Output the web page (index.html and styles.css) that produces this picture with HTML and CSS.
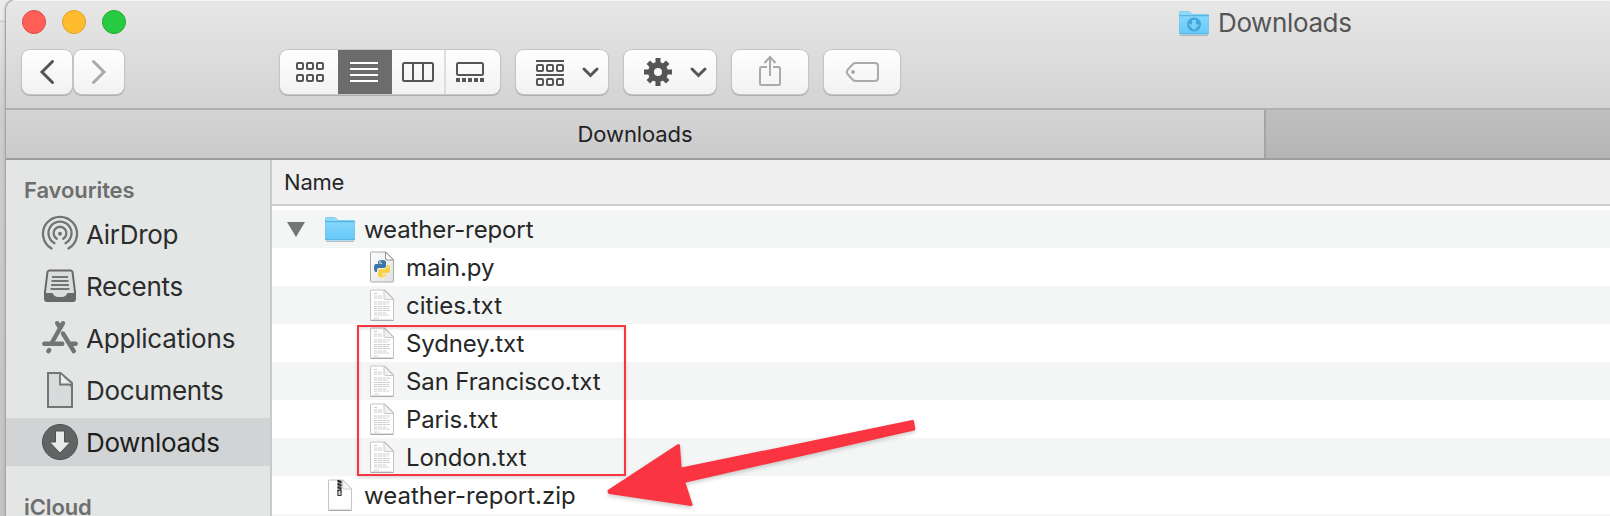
FILE: index.html
```
<!DOCTYPE html>
<html lang="en">
<head>
<meta charset="utf-8">
<title>Downloads</title>
<link rel="stylesheet" href="styles.css">
</head>
<body>
<svg class="defs" width="0" height="0" aria-hidden="true">
  <defs>
    <linearGradient id="folder-fill" x1="0" y1="0" x2="0" y2="1"><stop offset="0" stop-color="#84d6fb"/><stop offset="1" stop-color="#66c8f7"/></linearGradient>
    <linearGradient id="paper-fill" x1="0" y1="0" x2="1" y2="1"><stop offset="0" stop-color="#fdfdfd"/><stop offset="1" stop-color="#e2e2e2"/></linearGradient>
    <symbol id="folder" viewBox="0 0 32 28">
      <path d="M1 25V4q0-2 2-2h7q1 0 2 1l2 2h15q2 0 2 2v18z" fill="#74c3e8"/>
      <path d="M1.500 7V4q0-1.500 1.500-1.500h7q1 0 2 1L14 5.500h15q1.500 0 1.500 1.500z" fill="#8fd9fa"/>
      <path d="M1.500 7.500h29V24q0 1.500-1.500 1.500H3q-1.500 0-1.500-1.500z" fill="url(#folder-fill)"/>
      <path d="M1 6.500h30M1.500 24.500h29" stroke="#58b4e0" fill="none"/>
      <path d="M2 26.500h28" stroke="#999" opacity=".6"/>
    </symbol>
    <symbol id="text-file" viewBox="0 0 26 32">
      <path d="M1.500 2q0-1 1-1H16l8.500 8.500V30q0 1-1 1h-21q-1 0-1-1z" fill="#fff" stroke="#c4c4c4"/>
      <path d="M1.500 31.500h23" stroke="#a9a9a9"/>
      <path d="M15 1l9.500 9.500h-8q-1.500 0-1.500-1.500z" fill="#f2f2f2" stroke="#c8c8c8"/>
      <path d="M5 4.500h4M5 7h8M5 9h8M5 13h16M5 15h14M5 17.500h16M5 19.500h15M5 21.500h16M5 24h13M5 26h15M5 29h5" stroke="#c8c8c8" stroke-width=".9" stroke-dasharray="3 .6 5 .5"/>
    </symbol>
  </defs>
</svg>
<div class="window">
  <header class="toolbar">
    <div class="titlebar">
      <div class="lights"><i class="light red"></i><i class="light yellow"></i><i class="light green"></i></div>
      <div class="title">
        <svg width="32" height="28" viewBox="0 0 32 28"><use href="#folder"/><circle cx="16" cy="15.500" r="7" fill="#41a7dc"/><path d="M14 11h4v4.500h3.500L16 21l-5.500-5.500H14z" fill="#7dd0f8"/></svg>
        <span class="title-text">Downloads</span>
      </div>
    </div>
    <div class="buttons">
      <div class="button nav"><svg width="50" height="45"><path d="M30.500 11.500L20 22 30.500 32.500" fill="none" stroke="#555" stroke-width="3" stroke-linecap="round"/></svg></div>
      <div class="button nav"><svg width="50" height="45"><path d="M19.500 11.500L30 22 19.500 32.500" fill="none" stroke="#aaa" stroke-width="3" stroke-linecap="round"/></svg></div>
      <div class="button views">
        <div class="view grid"><svg width="58" height="45" fill="none" stroke="#555" stroke-width="2"><rect x="17" y="13" width="6" height="6" rx="1"/><rect x="27" y="13" width="6" height="6" rx="1"/><rect x="37" y="13" width="6" height="6" rx="1"/><rect x="17" y="25" width="6" height="6" rx="1"/><rect x="27" y="25" width="6" height="6" rx="1"/><rect x="37" y="25" width="6" height="6" rx="1"/></svg></div>
        <div class="view list"><svg width="54" height="45"><path d="M12 13h28M12 19h28M12 25h28M12 31h28" stroke="#fff" stroke-width="2"/></svg></div>
        <div class="view columns"><svg width="52" height="45" fill="none" stroke="#555" stroke-width="2"><rect x="11" y="13" width="30" height="18" rx="1.500"/><path d="M21 13v18M31 13v18"/></svg></div>
        <div class="view gallery"><svg width="54" height="45" fill="none" stroke="#555" stroke-width="2"><rect x="11" y="13" width="26" height="12" rx="1.500"/><path d="M10 30h28" stroke-width="4" stroke-dasharray="4 2"/></svg></div>
      </div>
      <div class="button menu"><svg width="92" height="45" fill="none" stroke="#555" stroke-width="2"><path d="M20 11h28M20 25h28"/><rect x="21" y="15" width="6" height="6" rx="1"/><rect x="31" y="15" width="6" height="6" rx="1"/><rect x="41" y="15" width="6" height="6" rx="1"/><rect x="21" y="29" width="6" height="6" rx="1"/><rect x="31" y="29" width="6" height="6" rx="1"/><rect x="41" y="29" width="6" height="6" rx="1"/><path d="M68 19l6.500 6.500L81 19" stroke-width="3" stroke-linecap="round"/></svg></div>
      <div class="button menu"><svg width="92" height="45" fill="none" stroke="#555"><g transform="translate(34 22)"><circle r="7" stroke-width="6"/><path d="M0-14v5M0 9v5M-14 0h5M9 0h5M-9.700-9.700l3.500 3.500M6.200 6.200l3.500 3.500M-9.700 9.700l3.500-3.500M6.200-6.200l3.500-3.500" stroke-width="5"/></g><path d="M68 19l6.500 6.500L81 19" stroke-width="3" stroke-linecap="round"/></svg></div>
      <div class="button single"><svg width="76" height="45" fill="none" stroke="#aaa" stroke-width="2"><path d="M35 17h-5.500q-1.500 0-1.500 1.500V33.500q0 1.500 1.500 1.500h17q1.500 0 1.500-1.500V18.500q0-1.500-1.500-1.500H41M38 26V7.500M32.500 13L38 7l5.500 6"/></svg></div>
      <div class="button single"><svg width="76" height="45" fill="none" stroke="#aaa" stroke-width="2"><path d="M32 13h19q3 0 3 3v12q0 3-3 3H32q-2 0-3-1l-5.500-6q-1.500-2 0-4L29 14q1-1 3-1z"/><circle cx="29" cy="22" r="2" fill="#aaa" stroke="none"/></svg></div>
    </div>
  </header>
  <nav class="tabs"><div class="tab active"><span class="tab-text">Downloads</span></div><div class="tab inactive"></div></nav>
  <div class="content">
    <aside class="sidebar">
      <h2 class="section">Favourites</h2>
      <div class="place"><svg width="38" height="38" fill="none" stroke="#737474" stroke-width="2.300" stroke-linecap="round"><path d="M10.500 33.500a17 17 0 1 1 17 0"/><path d="M13.500 28.200a11.500 11.500 0 1 1 11 0"/><path d="M15.800 23.700a6.400 6.400 0 1 1 6.400 0"/><circle cx="19" cy="18.700" r="2" fill="#737474" stroke="none"/></svg><span class="label airdrop">AirDrop</span></div>
      <div class="place"><svg width="38" height="38"><path d="M8.500 3.500h21q1.500 0 2 1.500L34 25v7q0 2-2 2H6q-2 0-2-2v-7L6.500 5q.5-1.500 2-1.500z" fill="#dcddde" stroke="#686969" stroke-width="2"/><path d="M4 26h7.500q2 4 5.500 4h4q3.500 0 5.500-4H34v6q0 2-2 2H6q-2 0-2-2z" fill="#686969"/><path d="M11 10h16M10.500 14h17M10 18h18M9.500 22h19" stroke="#747575" stroke-width="2"/></svg><span class="label recents">Recents</span></div>
      <div class="place"><svg width="38" height="38" fill="none" stroke="#737474" stroke-width="4.400" stroke-linecap="round"><path d="M22 4.200L11 23.500M3.300 24.700h18M30 24.700h4.700M8.200 31l-.8 1.200"/><path d="M16.200 4.200l2.300 3.500M22 14.500l10.800 17.700"/></svg><span class="label applications">Applications</span></div>
      <div class="place"><svg width="38" height="38"><path d="M7 2h12.500l11.500 10v24H7z" fill="#d9dadb" stroke="#737474" stroke-width="2"/><path d="M19 2v11.500h9q2 0 3 3" fill="#ecedec" stroke="#737474" stroke-width="1.800"/></svg><span class="label documents">Documents</span></div>
      <div class="place selected"><svg width="38" height="38"><circle cx="19" cy="19" r="17.500" fill="#626364" stroke="#4d4e4e"/><path d="M14.500 8h9v11h6L19 30 8.500 19h6z" fill="#e9eaea" stroke="#515252"/></svg><span class="label downloads">Downloads</span></div>
      <h2 class="section cloud">iCloud</h2>
    </aside>
    <main class="files">
      <div class="column-head"><span class="name-text">Name</span></div>
      <div class="rows">
        <div class="row top"><svg class="disclosure" width="18" height="15"><path d="M0 0h18L9 15z" fill="#747575"/></svg><svg width="32" height="28"><use href="#folder"/></svg><span class="file f-folder">weather-report</span></div>
        <div class="row child"><svg width="26" height="32" viewBox="0 0 26 32"><path d="M1.500 2q0-1 1-1H17l7.500 7.500V30q0 1-1 1h-21q-1 0-1-1z" fill="url(#paper-fill)" stroke="#a9a9a9"/><path d="M16.500 1l8 8h-6q-2 0-2-2z" fill="#fff" stroke="#8e8e8e"/><path d="M9 13v-2q0-2 4-2t4 2v4q0 2-2 2h-5q-2 0-2 2v2H7q-2 0-2-4t2-4h6v-1z" fill="#3977a8"/><path d="M17.500 14H19q2 0 2 4t-2 4h-6v1h4v1q0 2.500-4 2.500T9 24v-4q0-2 2-2h4.500q2 0 2-2z" fill="#fbd143"/><circle cx="11" cy="11" r=".8" fill="#fff"/><circle cx="15" cy="24.500" r=".8" fill="#fff"/></svg><span class="file f-main">main.py</span></div>
        <div class="row child"><svg width="26" height="32"><use href="#text-file"/></svg><span class="file f-cities">cities.txt</span></div>
        <div class="row child"><svg width="26" height="32"><use href="#text-file"/></svg><span class="file f-sydney">Sydney.txt</span></div>
        <div class="row child"><svg width="26" height="32"><use href="#text-file"/></svg><span class="file f-san">San Francisco.txt</span></div>
        <div class="row child"><svg width="26" height="32"><use href="#text-file"/></svg><span class="file f-paris">Paris.txt</span></div>
        <div class="row child"><svg width="26" height="32"><use href="#text-file"/></svg><span class="file f-london">London.txt</span></div>
        <div class="row archive"><svg width="26" height="32"><path d="M1.500 2q0-1 1-1H16l8.500 8.500V30q0 1-1 1h-21q-1 0-1-1z" fill="#fefefe" stroke="#c4c4c4"/><path d="M1.500 31.500h23" stroke="#aaa"/><path d="M15.500 1l9 9h-7q-2 0-2-2z" fill="#f6f6f6" stroke="#ccc"/><path d="M10.500 1h4v15h-4z" fill="#999"/><path d="M11.500 1v11M13.500 2v11" stroke="#222" stroke-width="2" stroke-dasharray="2 1.300"/><rect x="11" y="11.500" width="3" height="5" fill="#ddd" stroke="#333"/></svg><span class="file f-zip">weather-report.zip</span></div>
        <div class="row"></div>
      </div>
    </main>
  </div>
</div>
<div class="highlight-box"></div>
<svg class="arrow" width="320" height="100" viewBox="600 416 320 100"><path d="M609 491L678.500 445.500L680.300 469.300L912.500 421.500L913.800 429L683.500 481.500L691 504.500L609.500 492.500z" fill="#fa3541" stroke="#fa3541" stroke-width="3" stroke-linejoin="round"/></svg>
</body>
</html>
```
FILE: styles.css
```
* { box-sizing: border-box; }
body { margin: 0; width: 1610px; height: 516px; overflow: hidden; position: relative; padding-left: 6px; background: linear-gradient(#ececec 0, #ececec 20px, #c8c8c8 21px, #e4e4e4 23px, #cecece 120px, #c4c4c4); font-family: Inter, "Liberation Sans", sans-serif; color: #262727; }
svg { display: block; flex: none; }
.defs { position: absolute; }
.window { height: 516px; overflow: hidden; border-radius: 10px 0 0 0; box-shadow: 0 0 0 1px #a5a5a5, 0 0 4px #999; display: flex; flex-direction: column; background: #fff; }
.toolbar { height: 110px; flex: none; background: linear-gradient(#e7e7e7, #d3d3d3); border-bottom: 2px solid #b0b0b0; border-top: 1px solid #f5f5f5; }
.titlebar { height: 49px; display: flex; }
.lights { display: flex; gap: 16px; padding: 9px 0 0 16px; width: 1172px; flex: none; }
.light { width: 24px; height: 24px; border-radius: 50%; border: 1px solid; }
.red { background: #ff5f57; border-color: #e2463f; }
.yellow { background: #ffbd2e; border-color: #e1a023; }
.green { background: #28ca42; border-color: #1dad2b; }
.title { display: flex; gap: 8px; padding-top: 8px; }
.title-text { font-size: 26px; line-height: 28px; letter-spacing: -.38px; color: #555; white-space: nowrap; }
.buttons { display: flex; padding-left: 16px; }
.button { height: 44px; border-radius: 8px; background: linear-gradient(#fefefe, #f1f2f2); box-shadow: 0 0 0 1px #c6c6c6, 0 1px 1px 1px #aaa; margin-right: 16px; flex: none; }
.nav { width: 50px; margin-right: 2px; }
.views { width: 220px; margin-left: 154px; display: flex; overflow: hidden; }
.menu { width: 92px; }
.single { width: 76px; }
.view { flex: none; height: 45px; }
.grid { width: 58px; }
.list { width: 54px; background: #6c6c6c; }
.columns { width: 54px; border-right: 2px solid #dedede; }
.gallery { width: 54px; }
.tabs { height: 50px; flex: none; display: flex; border-bottom: 2px solid #9d9d9d; }
.active { width: 1260px; background: linear-gradient(#d4d4d4, #cbcbcb); border-right: 2px solid #a4a4a4; text-align: center; font-size: 22px; line-height: 48px; letter-spacing: -.1px; color: #222; }
.inactive { flex: 1; background: linear-gradient(#bfbfbf, #b5b5b5); }
.content { display: flex; height: 356px; }
.sidebar { width: 266px; flex: none; background: #e4e5e5; border-right: 2px solid #c9c9c9; }
.section { margin: 0; font-size: 22px; font-weight: 600; letter-spacing: -.1px; color: #6d6e6e; line-height: 30px; padding: 15px 0 0 18px; height: 51px; white-space: nowrap; }
.cloud { padding-top: 26px; }
.place { height: 48px; margin-bottom: 4px; padding-left: 35px; display: flex; align-items: center; gap: 7px; font-size: 26px; letter-spacing: -.28px; white-space: nowrap; color: #2b2d2d; }
.section + .place { margin-top: -1px; }
.selected { background: #d2d3d4; color: #1c1e1e; margin-bottom: 0; }
.airdrop { letter-spacing: -.3px; }
.downloads { letter-spacing: -.38px; }
.applications { letter-spacing: -.2px; }
.files { flex: 1; }
.column-head { height: 46px; background: #efefef; border-bottom: 2px solid #cdcdcd; padding-left: 12px; font-size: 22px; line-height: 44px; letter-spacing: -.2px; }
.rows { padding-top: 4px; }
.row { height: 38px; display: flex; align-items: center; font-size: 24px; letter-spacing: -.12px; white-space: nowrap; }
.row:nth-child(odd) { background: #f4f5f5; }
.top { padding-left: 15px; }
.disclosure { margin-right: 19px; }
.child { padding-left: 97px; }
.archive { padding-left: 55px; }
.child .file, .archive .file { margin-left: 11px; }
.top .file { margin-left: 8px; }
.f-cities, .f-zip { letter-spacing: 0; }
.highlight-box { position: absolute; left: 357px; top: 325px; width: 269px; height: 151px; border: 2px solid #fa3541; box-shadow: 0 2px 3px rgba(0,0,0,.15), inset 0 2px 3px rgba(0,0,0,.12); }
.arrow { position: absolute; left: 600px; top: 416px; filter: drop-shadow(0 2px 2px rgba(0,0,0,.2)); }
```
